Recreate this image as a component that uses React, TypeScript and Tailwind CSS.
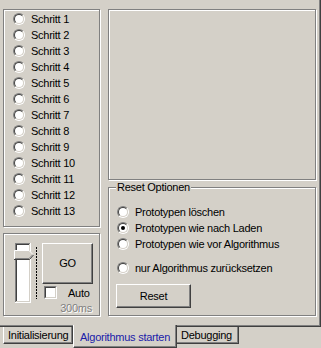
import React from "react";

const etched = "border border-[#808080] shadow-[inset_1px_1px_0_#fff,1px_1px_0_#fff]";
const raised =
  "border border-t-white border-l-white border-b-[#404040] border-r-[#404040] shadow-[inset_-1px_-1px_0_#808080]";

function Radio({ checked }: { checked?: boolean }) {
  return (
    <span className="flex h-3 w-3 shrink-0 items-center justify-center rounded-full border border-t-[#808080] border-l-[#808080] border-b-white border-r-white">
      <span className="flex h-[10px] w-[10px] items-center justify-center rounded-full border border-t-[#404040] border-l-[#404040] border-b-[#d4d0c8] border-r-[#d4d0c8] bg-white">
        {checked && <span className="h-1 w-1 rounded-full bg-black" />}
      </span>
    </span>
  );
}

function RadioRow({ label, checked }: { label: string; checked?: boolean }) {
  return (
    <div className="flex h-4 items-center gap-[6px]">
      <Radio checked={checked} />
      <span className="whitespace-nowrap">{label}</span>
    </div>
  );
}

function Slider() {
  return (
    <svg width="24" height="60" viewBox="0 0 24 60" className="shrink-0">
      <rect x="1" y="0" width="16" height="60" fill="#fff" />
      <line x1="1" y1="0.5" x2="17" y2="0.5" stroke="#808080" />
      <line x1="1.5" y1="0" x2="1.5" y2="60" stroke="#808080" />
      <line x1="2" y1="1.5" x2="16" y2="1.5" stroke="#404040" />
      <line x1="2.5" y1="1" x2="2.5" y2="59" stroke="#404040" />
      <line x1="1" y1="59.5" x2="17" y2="59.5" stroke="#fff" />
      <line x1="16.5" y1="0" x2="16.5" y2="60" stroke="#fff" />
      <line x1="2" y1="58.5" x2="16" y2="58.5" stroke="#d4d0c8" />
      <line x1="15.5" y1="1" x2="15.5" y2="59" stroke="#d4d0c8" />
      {/* thumb */}
      <polygon points="0,7 15,7 19.5,11.5 15,16 0,16" fill="#d4d0c8" />
      <polyline points="0.5,16 0.5,7.5 15,7.5 18.5,11" fill="none" stroke="#fff" />
      <polyline points="0,16.5 15.5,16.5 19.5,12" fill="none" stroke="#404040" />
      <polyline points="1,15.5 15,15.5 18.5,12" fill="none" stroke="#808080" />
      {/* ticks */}
      <line x1="22.5" y1="4" x2="22.5" y2="56" stroke="#000" strokeDasharray="2 1" />
    </svg>
  );
}

export default function App() {
  const steps = Array.from({ length: 13 }, (_, i) => `Schritt ${i + 1}`);

  return (
    <div className="flex h-[348px] w-[321px] flex-col bg-[#d4d0c8] font-['Liberation_Sans',Arial,sans-serif] text-[11px] leading-none tracking-[-0.25px] text-black">
      {/* Tab page */}
      <div className="h-[327px] w-[321px] border-r border-b border-[#404040]">
        <div className="flex h-full gap-[8px] border-r border-b border-[#808080] pl-[3px] pt-[9px]">
          {/* Left column */}
          <div className="flex w-[97px] flex-col gap-[6px]">
            <div className={`${etched} h-[218px] pl-[9px] pt-px`}>
              {steps.map((s) => (
                <RadioRow key={s} label={s} />
              ))}
            </div>
            <div className={`${etched} flex h-[83px] pl-[10px] pt-[9px]`}>
              <Slider />
              <div className="ml-[4px] flex flex-col">
                <div className={`${raised} flex h-[41px] w-[51px] items-center justify-center`}>
                  GO
                </div>
                <div className="mt-[2px] ml-[2px] flex items-center">
                  <span className="flex h-[13px] w-[13px] border border-t-[#808080] border-l-[#808080] border-b-white border-r-white">
                    <span className="h-full w-full border border-t-[#404040] border-l-[#404040] border-b-[#d4d0c8] border-r-[#d4d0c8] bg-white" />
                  </span>
                  <span className="ml-[11px] mt-[1px]">Auto</span>
                </div>
                <div className="mt-[4px] pr-[1px] text-right text-[#808080] [text-shadow:1px_1px_0_#fff]">
                  300ms
                </div>
              </div>
            </div>
          </div>

          {/* Right column */}
          <div className="flex w-[208px] flex-col">
            <div className={`${etched} h-[171px]`} />
            <div className={`${etched} relative mt-[7px] h-[129px] pt-[16px]`}>
              <span className="absolute left-[7px] top-[-6px] bg-[#d4d0c8] px-px">
                Reset Optionen
              </span>
              <div className="pl-[8px]">
                <RadioRow label="Prototypen löschen" />
                <RadioRow label="Prototypen wie nach Laden" checked />
                <RadioRow label="Prototypen wie vor Algorithmus" />
                <div className="mt-[8px]">
                  <RadioRow label="nur Algorithmus zurücksetzen" />
                </div>
              </div>
              <div
                className={`${raised} ml-[7px] mt-[8px] flex h-[24px] w-[75px] items-center justify-center`}
              >
                Reset
              </div>
            </div>
          </div>
        </div>
      </div>

      {/* Tabs */}
      <div className="flex items-start pl-[3px]">
        <div className="flex h-[17px] w-[70px] items-center border-l border-l-white border-r border-r-[#404040] border-b border-b-[#404040] pl-[4px] shadow-[inset_-1px_-1px_0_#808080]">
          Initialisierung
        </div>
        <div className="relative z-10 -mt-[2px] flex h-[23px] w-[104px] items-center border-l border-l-white border-r border-r-[#404040] border-b border-b-[#404040] bg-[#d4d0c8] pl-[6px] pt-[3px] text-[#1a1aa8] shadow-[inset_-1px_-1px_0_#808080]">
          Algorithmus starten
        </div>
        <div className="flex h-[17px] w-[62px] items-center border-r border-r-[#404040] border-b border-b-[#404040] pl-[4px] shadow-[inset_-1px_-1px_0_#808080]">
          Debugging
        </div>
      </div>
    </div>
  );
}
